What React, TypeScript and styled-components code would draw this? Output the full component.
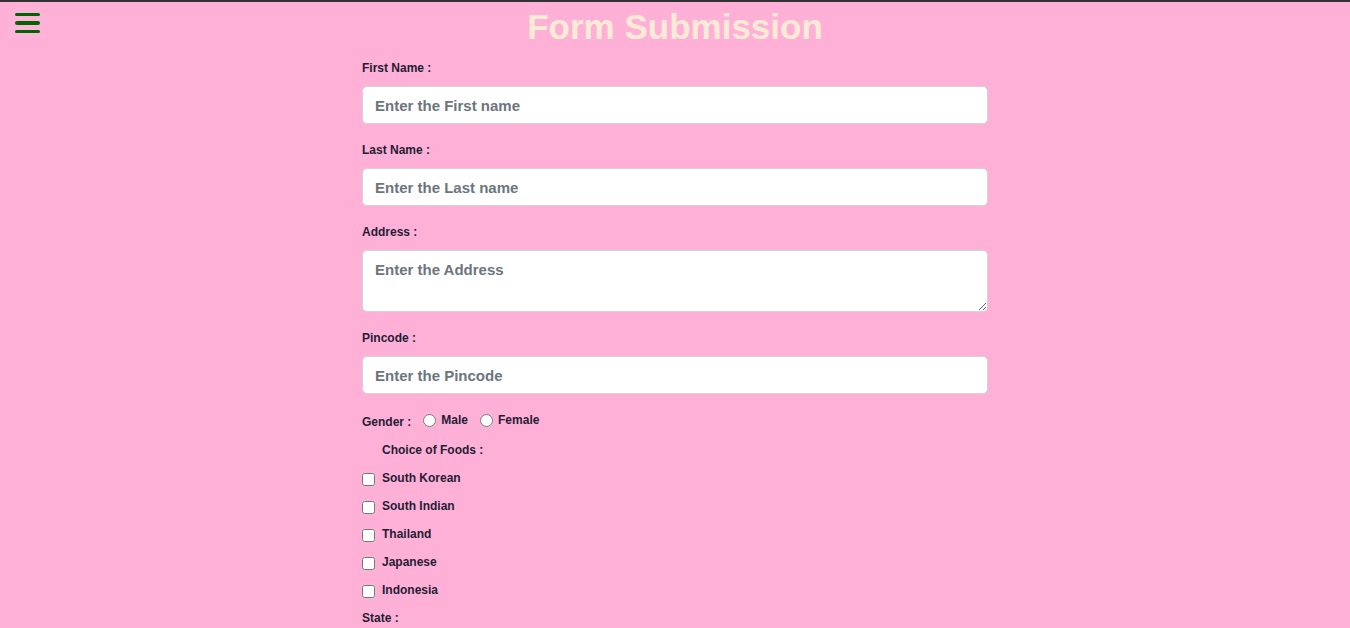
import React from 'react';
import styled, { createGlobalStyle } from 'styled-components';

const GlobalStyle = createGlobalStyle`
  html, body {
    margin: 0;
    padding: 0;
    background-color: #ffb0d7;
    font-family: 'Liberation Sans', Arial, sans-serif;
  }
  body {
    border-top: 2px solid #333;
    min-height: 100vh;
    box-sizing: border-box;
  }
`;

const Page = styled.div`
  display: flex;
  flex-direction: column;
  align-items: center;
`;

const Header = styled.header`
  display: grid;
  grid-template-columns: 1fr auto 1fr;
  align-items: start;
  width: 100%;
  height: 50px;
`;

const MenuButton = styled.button`
  display: flex;
  flex-direction: column;
  justify-content: center;
  gap: 5px;
  width: 38px;
  height: 30px;
  margin: 6px 0 0 8px;
  padding: 0 6px 0 7px;
  background-color: #ffb3d8;
  border: none;
  cursor: pointer;
`;

const MenuBar = styled.span`
  display: block;
  height: 3.5px;
  width: 25px;
  border-radius: 2px;
  background-color: #006400;
`;

const Title = styled.h1`
  margin: 5px 0 0;
  font-size: 35px;
  font-weight: bold;
  color: #faebd7;
`;

const Form = styled.form`
  display: flex;
  flex-direction: column;
  width: 626px;
  margin-top: 8px;
`;

const Label = styled.label<{ indent?: boolean }>`
  display: block;
  font-size: 12px;
  font-weight: bold;
  line-height: 14px;
  color: #1f1d35;
  margin-left: ${({ indent }) => (indent ? '20px' : '0')};
`;

const FieldLabel = styled(Label)`
  margin-top: 1px;
  margin-bottom: 11px;
`;

const Input = styled.input`
  box-sizing: border-box;
  width: 100%;
  height: 38px;
  margin-bottom: 18px;
  padding: 0 12px;
  font-family: 'Liberation Sans', Arial, sans-serif;
  font-size: 15px;
  font-weight: bold;
  border: 1px solid #ced4da;
  border-radius: 5px;
  background: #fff;

  &::placeholder {
    color: #6c757d;
  }
`;

const TextArea = styled.textarea`
  box-sizing: border-box;
  width: 100%;
  height: 62px;
  margin-bottom: 18px;
  padding: 10px 12px;
  font-family: 'Liberation Sans', Arial, sans-serif;
  font-size: 15px;
  font-weight: bold;
  border: 1px solid #ced4da;
  border-radius: 5px;
  background: #fff;
  display: block;

  &::placeholder {
    color: #6c757d;
  }
`;

const GenderRow = styled.div`
  display: flex;
  align-items: center;
  height: 20px;
  margin-top: -2px;
`;

const GenderLabel = styled(Label)`
  margin-top: 4px;
  margin-right: 6px;
`;

const RadioOption = styled.label`
  display: flex;
  align-items: center;
  font-size: 12px;
  font-weight: bold;
  color: #1f1d35;
  margin-right: 6px;

  input {
    margin: 0 5px 0 6px;
    width: 13px;
    height: 13px;
  }
`;

const FoodTitle = styled(Label)`
  margin-top: 13px;
  margin-bottom: 7px;
`;

const CheckRow = styled.label`
  display: flex;
  align-items: center;
  height: 28px;
  font-size: 12px;
  font-weight: bold;
  color: #1f1d35;

  input {
    margin: 2px 7px 0 0;
    width: 13px;
    height: 13px;
  }
`;

const StateLabel = styled(Label)`
  margin-top: 7px;
`;

const foods = ['South Korean', 'South Indian', 'Thailand', 'Japanese', 'Indonesia'];

export default function App() {
  return (
    <Page>
      <GlobalStyle />
      <Header>
        <div>
          <MenuButton type="button" aria-label="menu">
            <MenuBar />
            <MenuBar />
            <MenuBar />
          </MenuButton>
        </div>
        <Title>Form Submission</Title>
        <div />
      </Header>
      <Form onSubmit={(e) => e.preventDefault()}>
        <FieldLabel>First Name :</FieldLabel>
        <Input placeholder="Enter the First name" />
        <FieldLabel>Last Name :</FieldLabel>
        <Input placeholder="Enter the Last name" />
        <FieldLabel>Address :</FieldLabel>
        <TextArea placeholder="Enter the Address" />
        <FieldLabel>Pincode :</FieldLabel>
        <Input placeholder="Enter the Pincode" />
        <GenderRow>
          <GenderLabel>Gender :</GenderLabel>
          <RadioOption>
            <input type="radio" name="gender" />
            Male
          </RadioOption>
          <RadioOption>
            <input type="radio" name="gender" />
            Female
          </RadioOption>
        </GenderRow>
        <FoodTitle indent>Choice of Foods :</FoodTitle>
        {foods.map((food) => (
          <CheckRow key={food}>
            <input type="checkbox" />
            {food}
          </CheckRow>
        ))}
        <StateLabel>State :</StateLabel>
      </Form>
    </Page>
  );
}
